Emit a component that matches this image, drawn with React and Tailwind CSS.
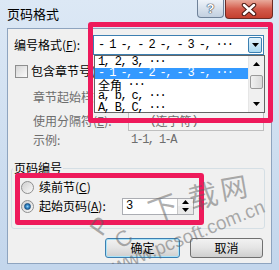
const mono = "font-['Liberation_Mono','Noto_Sans_CJK_SC',monospace] text-[12px] tracking-[-1.6px]";

function ArrowDown({ className = "" }) {
  return (
    <svg width="7" height="4" viewBox="0 0 7 4" className={className}>
      <path d="M0 0 L7 0 L3.5 4 Z" fill="#000" />
    </svg>
  );
}

function ArrowUp() {
  return (
    <svg width="7" height="4" viewBox="0 0 7 4">
      <path d="M0 4 L7 4 L3.5 0 Z" fill="#000" />
    </svg>
  );
}

function ListItem({ children, selected }) {
  return (
    <div
      className={
        "h-[11.5px] flex items-center pl-[3px] whitespace-pre " +
        (selected ? "bg-[#3399ff] text-white" : "text-black")
      }
    >
      {children}
    </div>
  );
}

function Radio({ checked }) {
  return (
    <div className="w-[13px] h-[13px] rounded-full border border-[#8e8f8f] bg-linear-to-br from-[#cfcfcf] to-[#fafafa] flex items-center justify-center">
      {checked && (
        <div className="w-[7px] h-[7px] rounded-full bg-radial from-[#8fd1f7] via-[#2b7fc0] to-[#1d5c92] border border-[#1b4f80]" />
      )}
    </div>
  );
}

export default function App() {
  return (
    <div className="relative w-[279px] h-[270px] overflow-hidden bg-linear-to-b from-[#dce8f5] to-[#c3d6ec] font-['Noto_Sans_CJK_SC',sans-serif] text-[12px] leading-none text-black select-none">
      {/* title bar */}
      <div className="flex h-[28px]">
        <div className="pl-[7px] pt-[7px] text-[13px]">页码格式</div>
        <div className="ml-auto mr-[6px] flex items-start gap-[1px]">
          <div className="w-[27px] h-[18px] border border-t-0 border-[#6f8299] rounded-b-[4px] bg-linear-to-b from-[#eef3f9] to-[#c2d0e0] flex items-center justify-center font-['Liberation_Sans',sans-serif] font-bold text-[13px] text-white [text-shadow:0_0_1px_#2d3a4a,0_0_1px_#2d3a4a,0_0_1px_#2d3a4a]">
            ?
          </div>
          <div className="w-[48px] h-[19px] border border-t-0 border-[#6e2b24] rounded-b-[4px] bg-linear-to-b from-[#e8aa9c] via-[#d35b4c] to-[#c4402f] flex items-center justify-center">
            <svg width="16" height="13" viewBox="0 0 16 13">
              <path d="M3 2 L13 11 M13 2 L3 11" stroke="#4a1a14" strokeWidth="4.5" strokeLinecap="round" />
              <path d="M3 2 L13 11 M13 2 L3 11" stroke="#fff" strokeWidth="2.5" strokeLinecap="round" />
            </svg>
          </div>
        </div>
      </div>

      {/* client area */}
      <div className="mx-[7px] h-[236px] border border-[#8ea4bf] bg-[#f0f0f0] flex flex-col pl-[6px] pr-[7px]">
        <div className="mt-[6px] h-[20px] flex items-center">
          <div className="w-[79px]">
            编号格式(<u>F</u>):
          </div>
          <div className="flex-1 h-full border border-[#3c7fb1] bg-white flex items-center">
            <div className={mono + " pl-[4px] flex-1 whitespace-pre"}>- 1 -, - 2 -, - 3 -, ···</div>
            <div className="w-[14px] h-[16px] mr-[1px] border border-[#3c7fb1] rounded-[2px] bg-linear-to-b from-[#e5f4fc] to-[#a9d9f2] flex items-center justify-center">
              <ArrowDown />
            </div>
          </div>
        </div>

        <div className="mt-[9px] h-[14px] flex items-center">
          <div className="ml-[1px] w-[13px] h-[13px] border border-[#8e8f8f] bg-linear-to-br from-[#d6d6d6] to-[#fbfbfb]" />
          <div className="ml-[3px]">
            包含章节号(<u>N</u>)
          </div>
        </div>

        <div className="mt-[10px] h-[18px] flex items-center pl-[19px] text-[#6d6d6d]">
          <div className="w-[95px]">章节起始样式(<u>P</u>):</div>
          <div className="flex-1 h-full border border-[#d3d3d3] bg-[#f4f4f4]" />
        </div>

        <div className="mt-[5px] h-[20px] flex items-center pl-[19px] text-[#6d6d6d]">
          <div className="w-[95px]">使用分隔符(<u>E</u>):</div>
          <div className="flex-1 h-full border border-[#bfbfbf] bg-[#f4f4f4] flex items-center">
            <div className={mono + " pl-[4px] whitespace-pre text-[#6d6d6d]"}>-  (</div>
            <div className="text-[#6d6d6d]">连字符</div>
            <div className={mono + " text-[#6d6d6d]"}>)</div>
          </div>
        </div>

        <div className="mt-[1px] h-[16px] flex items-center pl-[19px] text-[#6d6d6d]">
          <div className="w-[98px]">示例:</div>
          <div className={mono + " text-[#6d6d6d] whitespace-pre"}>1-1, 1-A</div>
        </div>

        <fieldset className="mt-[13px] ml-[-3px] mr-[-1px] h-[68px] border border-[#d5dfe5] rounded-[3px]">
          <legend className="ml-[1px] px-[1px] leading-[14px]">页码编号</legend>
          <div className="mt-[5px] h-[14px] flex items-center pl-[9px]">
            <Radio />
            <div className="ml-[5px]">
              续前节(<u>C</u>)
            </div>
          </div>
          <div className="mt-[3px] h-[18px] flex items-center pl-[9px]">
            <Radio checked />
            <div className="ml-[5px] w-[83px]">
              起始页码(<u>A</u>):
            </div>
            <div className="w-[72px] h-[17px] border border-[#abadb3] bg-white flex items-center">
              <div className={mono + " pl-[3px] flex-1"}>3</div>
              <div className="w-[16px] h-full flex flex-col border-l border-[#c8c8c8]">
                <div className="flex-1 flex items-center justify-center bg-[#f3f3f3]">
                  <ArrowUp />
                </div>
                <div className="flex-1 flex items-center justify-center bg-[#eaeaea]">
                  <ArrowDown />
                </div>
              </div>
            </div>
          </div>
        </fieldset>

        <div className="mt-[9px] h-[20px] flex justify-end gap-[10px] mr-[1px]">
          <div className="w-[75px] h-full rounded-[3px] border border-[#3c7fb1] bg-linear-to-b from-[#f2f2f2] via-[#e4e4e4] to-[#cfcfcf] flex items-center justify-center [box-shadow:inset_0_0_0_1px_#a9e3f8]">
            确定
          </div>
          <div className="w-[73px] h-full rounded-[3px] border border-[#707070] bg-linear-to-b from-[#f2f2f2] via-[#e4e4e4] to-[#cfcfcf] flex items-center justify-center">
            取消
          </div>
        </div>
      </div>

      {/* dropped-down list */}
      <div className={"absolute left-[94px] top-[55px] w-[171px] h-[58px] border border-[#646464] bg-white flex " + mono}>
        <div className="flex-1">
          <ListItem>1, 2, 3, ···</ListItem>
          <ListItem selected>- 1 -, - 2 -, - 3 -, ···</ListItem>
          <ListItem>
            <span className="font-['Noto_Sans_CJK_SC',sans-serif] tracking-normal">全角</span> ···
          </ListItem>
          <ListItem>a, b, c, ···</ListItem>
          <ListItem>A, B, C, ···</ListItem>
        </div>
        <div className="w-[16px] h-full bg-[#f0f0f0] flex flex-col border-l border-[#e6e6e6]">
          <div className="h-[16px] flex items-center justify-center">
            <ArrowUp />
          </div>
          <div className="mt-[3px] mx-[1px] h-[14px] rounded-[2px] border border-[#9a9a9a] bg-linear-to-r from-[#f1f1f1] to-[#d9d9d9]" />
          <div className="flex-1" />
          <div className="h-[16px] flex items-center justify-center">
            <ArrowDown />
          </div>
        </div>
      </div>

      {/* red highlight boxes */}
      <div className="absolute left-[88px] top-[22px] w-[185px] h-[101px] border-[5px] border-[#ee1a5b] rounded-[3px]" />
      <div className="absolute left-[15px] top-[173px] w-[189px] h-[52px] border-[5px] border-[#ee1a5b] rounded-[3px]" />

      {/* watermark */}
      <div className="absolute inset-0 pointer-events-none font-['Liberation_Sans',sans-serif] text-[rgba(95,95,95,0.5)]">
        <span className="absolute left-[92px] top-[214px] text-[24px] -rotate-[55deg]">P</span>
        <span className="absolute left-[116px] top-[228px] text-[22px] -rotate-[40deg]">C</span>
        <span className="absolute left-[148px] top-[192px] text-[29px] -rotate-[20deg] font-['Noto_Sans_CJK_SC',sans-serif]">下</span>
        <span className="absolute left-[188px] top-[180px] text-[29px] -rotate-[15deg] font-['Noto_Sans_CJK_SC',sans-serif]">载</span>
        <span className="absolute left-[220px] top-[173px] text-[27px] -rotate-[10deg] font-['Noto_Sans_CJK_SC',sans-serif]">网</span>
        <span className="absolute left-[113px] top-[257px] text-[19px] leading-none origin-left -rotate-[22deg] whitespace-nowrap">
          www.pcsoft.com.cn
        </span>
      </div>

      {/* bottom frame shade */}
      <div className="absolute left-0 right-0 bottom-0 h-[6px] bg-[#c3d6ec]" />
    </div>
  );
}
